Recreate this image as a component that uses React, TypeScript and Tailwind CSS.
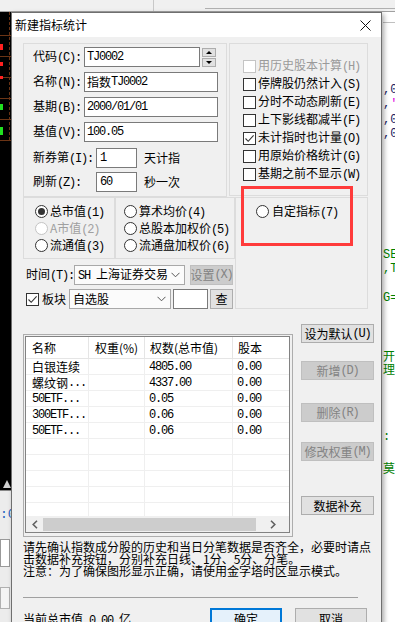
import React from "react";

const M = ({ children }: { children: React.ReactNode }) => (
  <span className="font-['Liberation_Mono',monospace] tracking-[-1.2px]">{children}</span>
);

function Check({ checked, disabled }: { checked?: boolean; disabled?: boolean }) {
  return (
    <span
      className={`flex h-[13px] w-[13px] shrink-0 items-center justify-center border bg-white ${
        disabled ? "border-[#c4c4c4]" : "border-[#333333]"
      }`}
    >
      {checked && (
        <svg width="11" height="11" viewBox="0 0 11 11">
          <path d="M1.5 5.5 L4.2 8.3 L9.6 2.4" fill="none" stroke="#333" strokeWidth="1.1" />
        </svg>
      )}
    </span>
  );
}

function Radio({ checked, disabled }: { checked?: boolean; disabled?: boolean }) {
  return (
    <span
      className={`flex h-[13px] w-[13px] shrink-0 items-center justify-center rounded-full border bg-white ${
        disabled ? "border-[#c4c4c4]" : "border-[#333333]"
      }`}
    >
      {checked && <span className="h-[7px] w-[7px] rounded-full bg-[#333333]" />}
    </span>
  );
}

function Btn({
  children,
  disabled,
  className = "",
}: {
  children: React.ReactNode;
  disabled?: boolean;
  className?: string;
}) {
  return (
    <div
      className={`flex shrink-0 items-center justify-center whitespace-nowrap border ${
        disabled ? "border-[#bfbfbf] bg-[#cccccc] text-[#838383]" : "border-[#adadad] bg-[#e1e1e1] text-black"
      } ${className}`}
    >
      {children}
    </div>
  );
}

function Chevron() {
  return (
    <svg width="9" height="6" viewBox="0 0 9 6">
      <path d="M0.5 0.8 L4.5 4.8 L8.5 0.8" fill="none" stroke="#555" strokeWidth="1" />
    </svg>
  );
}

const rows: [React.ReactNode, string, string][] = [
  ["白银连续", "4805.00", "0.00"],
  [<>螺纹钢<M>...</M></>, "4337.00", "0.00"],
  [<M>50ETF...</M>, "0.05", "0.00"],
  [<M>300ETF...</M>, "0.06", "0.00"],
  [<M>50ETF...</M>, "0.06", "0.00"],
  ["", "", ""],
  ["", "", ""],
  ["", "", ""],
  ["", "", ""],
];

export default function App() {
  return (
    <div className="relative h-[622px] w-[395px] overflow-hidden whitespace-nowrap bg-white font-['Noto_Sans_CJK_SC',sans-serif] text-[12px] leading-none text-black">
      {/* background application */}
      <div className="flex h-full w-full flex-col">
        <div className="relative flex h-[12px] w-full border-b border-[#a0a0a0] bg-[#f0f0f0]">
          <div className="ml-[153px] h-full w-px bg-[#c8c8c8]" />
          <div className="ml-[51px] mt-[8px] h-px flex-1 bg-[#b0b0b0]" />
        </div>
        <div className="flex flex-1">
          {/* left strip */}
          <div className="flex w-[11px] flex-col">
            <div className="relative flex h-[478px] flex-col bg-black">
              <div className="ml-[9px] h-[128px] w-px border-l border-dashed border-[#6b3415]" />
            </div>
            <div className="flex flex-1 flex-col border-t border-[#888] bg-[#ececec]">
              <div className="mt-[17px] font-['Liberation_Mono',monospace] text-[13px] leading-[13px] text-[#1f5fbf]">:0</div>
              <div className="mt-[18px] h-[28px] w-[10px] border border-[#9a9a9a] bg-white" />
              <div className="mt-[20px] h-[22px] w-[10px] border border-[#b0b0b0] bg-[#f4f4f4]" />
            </div>
          </div>
          <div className="flex-1" />
          {/* right strip */}
          <div className="flex w-[13px] flex-col overflow-hidden pl-[1px] font-['Liberation_Mono',monospace] text-[12px] leading-[12px]">
            <div className="mt-[10px] h-px w-full bg-[#c0c0c0]" />
            <div className="mt-[61px] text-[#1a1a5e]">,0</div>
            <div className="mt-[2px] text-[#1a1a5e]">
              ,<span className="text-[#e000e0]">'</span>
            </div>
            <div className="mt-[4px] text-[#1a1a5e]">,0</div>
            <div className="mt-[2px] text-[#1a1a5e]">,0</div>
            <div className="mt-[109px] text-[#008000]">SE</div>
            <div className="mt-[2px] text-[#008000]">,TI</div>
            <div className="mt-[17px] text-[#008000]">G=</div>
            <div className="mt-[46px] h-[13px] font-['Noto_Sans_CJK_SC',sans-serif] text-[#008000]">开</div>
            <div className="h-[13px] font-['Noto_Sans_CJK_SC',sans-serif] text-[#008000]">理设</div>
            <div className="mt-[55px] text-[#008000]">:</div>
            <div className="mt-[19px] font-['Noto_Sans_CJK_SC',sans-serif] text-[#008000]">莫板</div>
          </div>
        </div>
      </div>

      {/* left strip grid overlay */}
      <div className="absolute left-0 top-[35px] flex w-[11px] flex-col">
        {[0, 1, 2, 3, 4, 5].map((i) => (
          <div key={i} className="h-[21px] border-t border-[#6b3415]" />
        ))}
      </div>
      <div className="absolute left-0 top-[44px] h-[6px] w-[3px] bg-[#ff2020]" />
      <div className="absolute left-0 top-[62px] h-[4px] w-[3px] bg-[#ff2020]" />
      <div className="absolute left-0 top-[76px] h-[3px] w-[3px] bg-[#ff2020]" />
      <div className="absolute left-0 top-[104px] h-[6px] w-[3px] bg-[#20e020]" />
      <div className="absolute left-0 top-[127px] h-[8px] w-[3px] bg-[#20e020]" />
      <div className="absolute left-[3px] top-[480px] h-0 w-0 border-x-[4px] border-b-[8px] border-x-transparent border-b-[#d0d0d0]" />

      {/* dialog */}
      <div className="absolute left-[11px] top-[12px] flex h-[620px] w-[371px] flex-col border border-[#6f6f6f] bg-[#f0f0f0] shadow-[2px_2px_5px_rgba(0,0,0,0.35)]">
        <div className="flex h-[24px] shrink-0 items-center justify-between bg-white pl-[3px] pr-[10px]">
          <span className="text-[12px]">新建指标统计</span>
          <svg width="11" height="11" viewBox="0 0 11 11">
            <path d="M0.5 0.5 L10.5 10.5 M10.5 0.5 L0.5 10.5" stroke="#111" strokeWidth="1" />
          </svg>
        </div>

        <div className="flex flex-col pl-[11px] pt-[6px]">
          {/* top groups */}
          <div className="flex">
            <div className="flex h-[154px] w-[204px] flex-col border border-[#dcdcdc] pl-[9px] pt-[3px]">
              <div className="flex h-[20px] items-center">
                <span className="w-[51px] shrink-0">代码<M>(C):</M></span>
                <div className="flex h-[20px] w-[116px] items-center border border-[#7a7a7a] bg-white pl-[2px]">
                  <M>TJ0002</M>
                </div>
                <div className="ml-[2px] flex w-[14px] flex-col gap-px">
                  <div className="flex h-[9px] items-center justify-center border border-[#adadad] bg-[#e1e1e1]">
                    <div className="h-0 w-0 border-x-[3px] border-b-[3px] border-x-transparent border-b-black" />
                  </div>
                  <div className="flex h-[9px] items-center justify-center border border-[#adadad] bg-[#e1e1e1]">
                    <div className="h-0 w-0 border-x-[3px] border-t-[3px] border-x-transparent border-t-black" />
                  </div>
                </div>
              </div>
              <div className="mt-[5px] flex h-[20px] items-center">
                <span className="w-[51px] shrink-0">名称<M>(N):</M></span>
                <div className="flex h-[20px] w-[134px] items-center border border-[#7a7a7a] bg-white pl-[2px]">
                  指数<M>TJ0002</M>
                </div>
              </div>
              <div className="mt-[5px] flex h-[20px] items-center">
                <span className="w-[51px] shrink-0">基期<M>(B):</M></span>
                <div className="flex h-[20px] w-[134px] items-center border border-[#7a7a7a] bg-white pl-[2px]">
                  <M>2000/01/01</M>
                </div>
              </div>
              <div className="mt-[5px] flex h-[20px] items-center">
                <span className="w-[51px] shrink-0">基值<M>(V):</M></span>
                <div className="flex h-[20px] w-[134px] items-center border border-[#7a7a7a] bg-white pl-[2px]">
                  <M>100.05</M>
                </div>
              </div>
              <div className="mt-[6px] flex h-[20px] items-center">
                <span className="w-[63px] shrink-0">新券第<M>(I):</M></span>
                <div className="flex h-[20px] w-[41px] items-center border border-[#7a7a7a] bg-white pl-[3px]">
                  <M>1</M>
                </div>
                <span className="ml-[7px]">天计指</span>
              </div>
              <div className="mt-[4px] flex h-[20px] items-center">
                <span className="w-[63px] shrink-0">刷新<M>(Z):</M></span>
                <div className="flex h-[20px] w-[41px] items-center border border-[#7a7a7a] bg-white pl-[3px]">
                  <M>60</M>
                </div>
                <span className="ml-[7px]">秒一次</span>
              </div>
            </div>

            <div className="ml-[2px] flex h-[153px] w-[139px] flex-col border border-[#dcdcdc] pl-[13px] pt-[13px]">
              {[
                ["用历史股本计算", "(H)", false, true],
                ["停牌股仍然计入", "(S)", false, false],
                ["分时不动态刷新", "(E)", false, false],
                ["上下影线都减半", "(F)", false, false],
                ["未计指时也计量", "(O)", true, false],
                ["用原始价格统计", "(G)", false, false],
                ["基期之前不显示", "(W)", false, false],
              ].map(([t, k, c, d]) => (
                <div key={t as string} className="flex h-[18px] items-center gap-[2px]">
                  <Check checked={c as boolean} disabled={d as boolean} />
                  <span className={d ? "text-[#9a9a9a]" : ""}>
                    {t as string}
                    <M>{k as string}</M>
                  </span>
                </div>
              ))}
            </div>
          </div>

          {/* radios + time/plate */}
          <div className="flex">
            <div className="flex w-[212px] flex-col">
              <div className="flex h-[62px]">
                <div className="flex w-[92px] flex-col border border-[#dcdcdc] pl-[11px] pt-[5px]">
                  <div className="flex h-[17px] items-center gap-[2px]">
                    <Radio checked />
                    <span>总市值<M>(1)</M></span>
                  </div>
                  <div className="flex h-[17px] items-center gap-[2px] text-[#a0a0a0]">
                    <Radio disabled />
                    <span>A市值<M>(2)</M></span>
                  </div>
                  <div className="flex h-[17px] items-center gap-[2px]">
                    <Radio />
                    <span>流通值<M>(3)</M></span>
                  </div>
                </div>
                <div className="flex w-[120px] flex-col border border-[#dcdcdc] pl-[8px] pt-[5px]">
                  <div className="flex h-[17px] items-center gap-[2px]">
                    <Radio />
                    <span>算术均价<M>(4)</M></span>
                  </div>
                  <div className="flex h-[17px] items-center gap-[2px]">
                    <Radio />
                    <span>总股本加权价<M>(5)</M></span>
                  </div>
                  <div className="flex h-[17px] items-center gap-[2px]">
                    <Radio />
                    <span>流通盘加权价<M>(6)</M></span>
                  </div>
                </div>
              </div>

              <div className="mt-[6px] flex h-[20px] items-center pl-[3px]">
                <span className="w-[48px] shrink-0">时间<M>(T):</M></span>
                <div className="flex h-[20px] w-[111px] shrink-0 items-center justify-between border border-[#a8a8a8] bg-[#fbfbfb] pl-[3px] pr-[4px]">
                  <span>
                    <M>SH </M>上海证券交易
                  </span>
                  <Chevron />
                </div>
                <Btn disabled className="ml-[5px] h-[20px] w-[43px]">
                  设置<M>(X)</M>
                </Btn>
              </div>

              <div className="mt-[4px] flex h-[20px] items-center pl-[3px]">
                <Check checked />
                <span className="ml-[3px] w-[24px] shrink-0">板块</span>
                <div className="ml-[3px] flex h-[20px] w-[102px] shrink-0 items-center justify-between border border-[#a8a8a8] bg-[#fbfbfb] pl-[3px] pr-[4px]">
                  <span>自选股</span>
                  <Chevron />
                </div>
                <div className="ml-[2px] h-[20px] w-[35px] shrink-0 border border-[#7a7a7a] bg-white" />
                <Btn className="ml-[2px] h-[20px] w-[23px]">查</Btn>
              </div>
            </div>

            <div className="flex h-[112px] w-[133px] flex-col border border-[#dcdcdc] pl-[20px] pt-[5px]">
              <div className="flex h-[17px] items-center gap-[3px]">
                <Radio />
                <span>自定指标<M>(7)</M></span>
              </div>
            </div>
          </div>

          {/* table + buttons */}
          <div className="mt-[15px] flex items-start">
            <div className="mt-[10px] flex h-[203px] w-[270px] flex-col border border-[#adadad] pb-[3px] pl-px pr-[2px] pt-px">
              <div className="flex flex-1 flex-col overflow-hidden border border-[#828282] bg-white">
                <div className="flex h-[22px] shrink-0 items-center border-b border-[#e5e5e5]">
                  <div className="flex h-full w-[63px] shrink-0 items-center border-r border-[#e5e5e5] pl-[6px]">名称</div>
                  <div className="flex h-full w-[56px] shrink-0 items-center border-r border-[#e5e5e5] pl-[6px]">权重(%)</div>
                  <div className="flex h-full w-[88px] shrink-0 items-center border-r border-[#e5e5e5] pl-[5px]">权数(总市值)</div>
                  <div className="flex h-full flex-1 items-center pl-[5px]">股本</div>
                </div>
                {rows.map((r, i) => (
                  <div key={i} className="flex h-[16px] shrink-0 items-center border-b border-[#efefef]">
                    <div className="flex h-full w-[63px] shrink-0 items-center overflow-hidden border-r border-[#efefef] pl-[6px]">
                      {r[0]}
                    </div>
                    <div className="h-full w-[56px] shrink-0 border-r border-[#efefef]" />
                    <div className="flex h-full w-[88px] shrink-0 items-center border-r border-[#efefef] pl-[4px]">
                      <M>{r[1]}</M>
                    </div>
                    <div className="flex h-full flex-1 items-center pl-[4px]">
                      <M>{r[2]}</M>
                    </div>
                  </div>
                ))}
                <div className="flex flex-1">
                  <div className="w-[63px] shrink-0 border-r border-[#efefef]" />
                  <div className="w-[56px] shrink-0 border-r border-[#efefef]" />
                  <div className="w-[88px] shrink-0 border-r border-[#efefef]" />
                </div>
                <div className="flex h-[16px] shrink-0 items-center bg-[#f0f0f0]">
                  <div className="flex w-[17px] items-center justify-center">
                    <svg width="6" height="9" viewBox="0 0 6 9">
                      <path d="M5 0.8 L1.2 4.5 L5 8.2" fill="none" stroke="#606060" strokeWidth="1.6" />
                    </svg>
                  </div>
                  <div className="h-[13px] w-[213px] bg-[#cdcdcd]" />
                  <div className="flex flex-1 items-center justify-center">
                    <svg width="6" height="9" viewBox="0 0 6 9">
                      <path d="M1 0.8 L4.8 4.5 L1 8.2" fill="none" stroke="#606060" strokeWidth="1.6" />
                    </svg>
                  </div>
                </div>
              </div>
            </div>

            <div className="ml-[8px] flex w-[73px] flex-col">
              <Btn className="h-[19px]">
                设为默认<M>(U)</M>
              </Btn>
              <Btn disabled className="mt-[18px] h-[19px]">
                新增<M>(D)</M>
              </Btn>
              <Btn disabled className="mt-[23px] h-[19px]">
                删除<M>(R)</M>
              </Btn>
              <Btn disabled className="mt-[20px] h-[19px]">
                修改权重<M>(M)</M>
              </Btn>
              <Btn className="mt-[35px] h-[19px]">数据补充</Btn>
            </div>
          </div>

          {/* notes */}
          <div className="mt-[4px] flex flex-col text-[12px]">
            <div className="h-[12px] leading-[12px]">请先确认指数成分股的历史和当日分笔数据是否齐全，必要时请点</div>
            <div className="h-[12px] leading-[12px]">击数据补充按钮，分别补充日线、1分、5分、分笔。</div>
            <div className="h-[12px] leading-[12px]">注意：为了确保图形显示正确，请使用金字塔时区显示模式。</div>
          </div>

          <div className="mt-[20px] h-px w-[335px] bg-[#a0a0a0]" />

          <div className="mt-[10px] flex h-[22px] items-center">
            <span className="w-[187px] shrink-0 pt-[2px]">
              当前总市值<M> 0.00 </M>亿
            </span>
            <div className="flex h-[22px] w-[72px] shrink-0 items-center justify-center border-2 border-[#0078d7] bg-[#e5f1fb]">
              确定
            </div>
            <Btn className="ml-[13px] h-[22px] w-[72px]">取消</Btn>
          </div>
        </div>
      </div>

      {/* annotation highlight */}
      <div className="absolute left-[241px] top-[186px] h-[60px] w-[112px] border-[3px] border-[#ff3b3b]" />
    </div>
  );
}
